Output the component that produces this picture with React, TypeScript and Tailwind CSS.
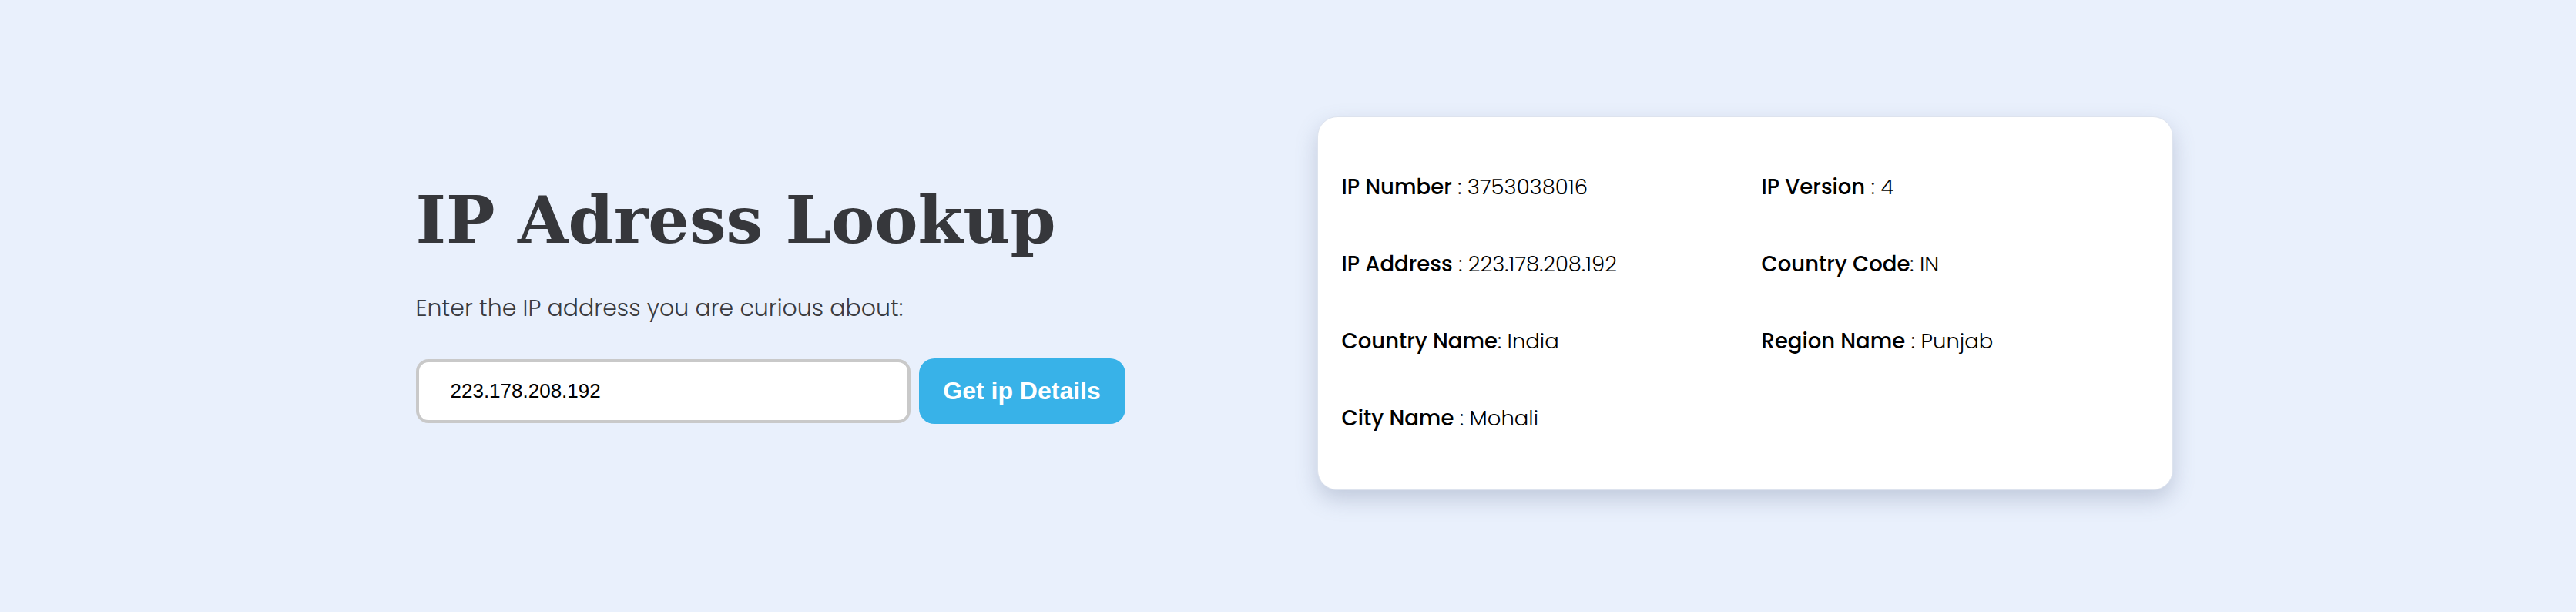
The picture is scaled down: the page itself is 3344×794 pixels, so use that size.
import React from "react";

const DETAILS: { label: string; value: string }[] = [
  { label: "IP Number", value: " : 3753038016" },
  { label: "IP Version", value: " : 4" },
  { label: "IP Address", value: " : 223.178.208.192" },
  { label: "Country Code", value: ": IN" },
  { label: "Country Name", value: ": India" },
  { label: "Region Name", value: " : Punjab" },
  { label: "City Name", value: " : Mohali" },
];

export default function App() {
  return (
    <div className="min-h-[794px] w-full bg-[#e9f0fc] flex items-center justify-center pl-4">
      <div className="w-[1170px] flex flex-col">
        <h1 className="font-['DejaVu_Serif',serif] font-bold text-[84.5px] leading-none text-[#36373b]">
          IP Adress Lookup
        </h1>
        <p className="mt-[56px] font-['Poppins','Inter',sans-serif] font-light text-[30px] leading-none text-[#3a3b40]">
          Enter the IP address you are curious about:
        </p>
        <div className="mt-[50px] flex items-center gap-[11px]">
          <input
            defaultValue="223.178.208.192"
            className="w-[642px] h-[83px] rounded-[16px] border-4 border-[#c9c9c9] bg-white pl-[41px] font-['Liberation_Sans',Arial,sans-serif] text-[26px] text-black outline-none"
          />
          <button className="w-[268px] h-[85px] rounded-[20px] bg-[#38b2e8] font-['Liberation_Sans',Arial,sans-serif] font-bold text-[32px] text-white">
            Get ip Details
          </button>
        </div>
      </div>

      <div className="mb-[8px] w-[1111px] rounded-[26px] border border-[#dde3ee] bg-white shadow-[0_12px_28px_rgba(90,105,140,0.28)] pl-[31px] pt-[71px] pb-[72px]">
        <div className="grid grid-cols-[545px_1fr] gap-y-[60px] font-['Poppins','Inter',sans-serif] text-[27.5px] leading-[40px] text-black">
          {DETAILS.map(d => (
            <p key={d.label}>
              <span className="font-medium">{d.label}</span>
              <span className="font-light">{d.value}</span>
            </p>
          ))}
        </div>
      </div>
    </div>
  );
}
